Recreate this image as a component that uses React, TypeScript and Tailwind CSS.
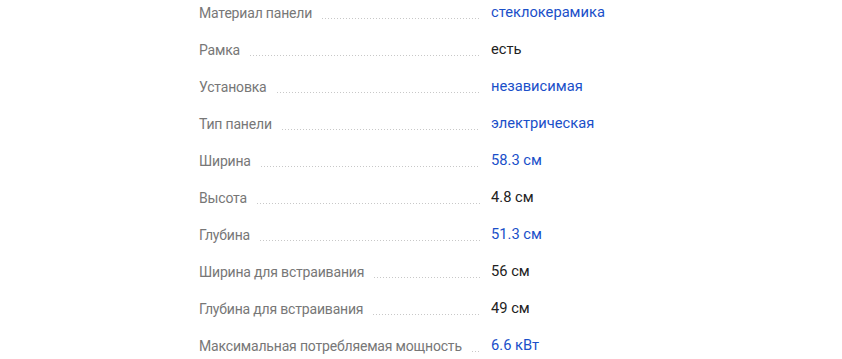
import React from "react";

const rows: { label: string; value: string; link: boolean }[] = [
  { label: "Материал панели", value: "стеклокерамика", link: true },
  { label: "Рамка", value: "есть", link: false },
  { label: "Установка", value: "независимая", link: true },
  { label: "Тип панели", value: "электрическая", link: true },
  { label: "Ширина", value: "58.3 см", link: true },
  { label: "Высота", value: "4.8 см", link: false },
  { label: "Глубина", value: "51.3 см", link: true },
  { label: "Ширина для встраивания", value: "56 см", link: false },
  { label: "Глубина для встраивания", value: "49 см", link: false },
  { label: "Максимальная потребляемая мощность", value: "6.6 кВт", link: true },
];

export default function App() {
  return (
    <div
      className="w-[842px] h-[359px] overflow-hidden bg-white pt-[3px] pl-[199px]"
      style={{ fontFamily: "Roboto, 'Open Sans', sans-serif" }}
    >
      <div className="flex flex-col gap-[17px]">
        {rows.map((r) => (
          <div key={r.label} className="flex items-center h-[20px]">
            <div className="w-[281px] flex items-end h-[20px]">
              <span className="text-[14px] tracking-[-0.18px] leading-[20px] text-[#777777] whitespace-nowrap">
                {r.label}
              </span>
              <span className="flex-1 ml-[10px] mb-[4px] h-px bg-[linear-gradient(to_right,#c8c8c8_1px,transparent_1px)] bg-[length:3px_1px]" />
            </div>
            <span
              className={`ml-[11px] -mt-[3px] text-[14.7px] leading-[20px] whitespace-nowrap ${
                r.link ? "text-[#1a4fc9]" : "text-[#222222]"
              }`}
            >
              {r.value}
            </span>
          </div>
        ))}
      </div>
    </div>
  );
}
